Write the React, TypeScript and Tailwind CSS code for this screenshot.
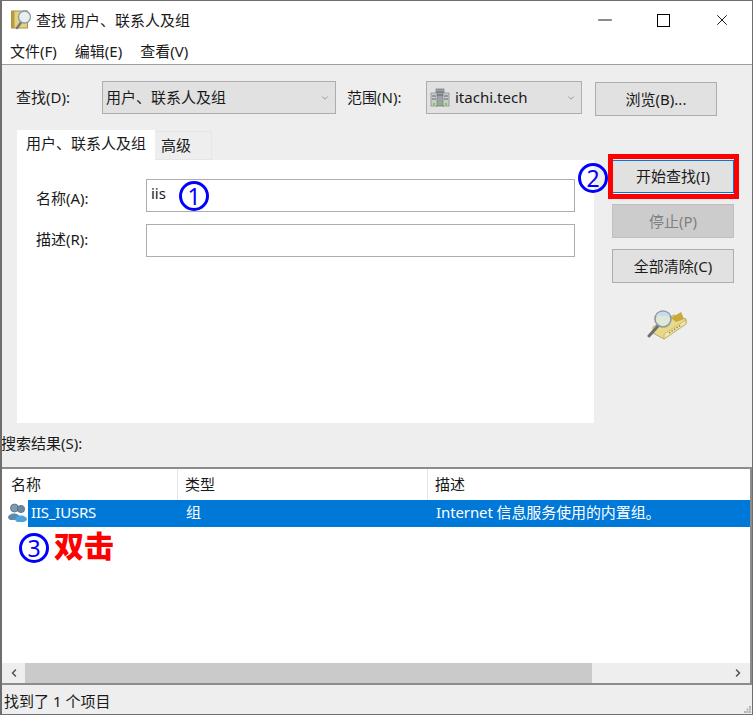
import { ChevronDown, ChevronLeft, ChevronRight, Minus, X } from "lucide-react";

const font = "font-['Noto_Sans','Noto_Sans_CJK_SC',sans-serif]";

function SearchBookIcon({ className }: { className?: string }) {
  return (
    <svg viewBox="0 0 40 30" className={className}>
      <path d="M6 17 L27 5 L39 9 L39 14 L17 29 L6 23 Z" fill="#e8d98a" stroke="#b09a4a" strokeWidth="0.8" />
      <path d="M24 8 L34 2 L37 9 L29 12 Z" fill="#c9a83c" />
      <path d="M17 29 L39 14 L39 10 L17 24 Z" fill="#f2e6a6" stroke="#b5a355" strokeWidth="0.6" />
      <path d="M22 23 L34 15" stroke="#8f8350" strokeWidth="1.4" strokeDasharray="1.5 1.5" />
      <path d="M11 16 L2 26" stroke="#6e6e6e" strokeWidth="3" strokeLinecap="round" />
      <circle cx="16" cy="9" r="8" fill="#dfe7d8" stroke="#8b98a4" strokeWidth="1.6" />
      <path d="M9 6 A8 8 0 0 1 23 6 Z" fill="#c4dcee" />
    </svg>
  );
}

function TitleIcon() {
  return (
    <svg viewBox="0 0 20 20" className="w-5 h-5 shrink-0">
      <rect x="0.5" y="1" width="16" height="17" fill="#e3d27f" stroke="#a8924a" strokeWidth="1" />
      <rect x="0.5" y="1" width="3" height="17" fill="#b59b45" />
      <path d="M11 11 L6 18" stroke="#77777a" strokeWidth="2.4" strokeLinecap="round" />
      <circle cx="13.5" cy="7" r="6" fill="#e9eef0" stroke="#8a9aa6" strokeWidth="1.3" />
    </svg>
  );
}

function ServerIcon() {
  return (
    <svg viewBox="0 0 20 20" className="w-5 h-5 shrink-0">
      <rect x="6" y="1" width="8" height="17" fill="#9aa3a5" stroke="#6f787a" strokeWidth="0.7" />
      <rect x="1" y="5" width="6" height="13" fill="#c9cdcb" stroke="#7c8486" strokeWidth="0.7" />
      <rect x="13" y="5" width="6" height="13" fill="#c9cdcb" stroke="#7c8486" strokeWidth="0.7" />
      <path d="M2 8h4M2 11h4M14 8h4M14 11h4M7 4h6M7 7h6" stroke="#5d6668" strokeWidth="1" />
      <rect x="3" y="15" width="2" height="2" fill="#6fd02f" />
      <rect x="9" y="15" width="2" height="2" fill="#6fd02f" />
      <rect x="15" y="15" width="2" height="2" fill="#6fd02f" />
    </svg>
  );
}

function GroupIcon() {
  return (
    <svg viewBox="0 0 20 20" className="w-5 h-5 shrink-0 self-start mt-[3px]">
      <circle cx="6.5" cy="5" r="4" fill="#7d9bb2" stroke="#4f6a80" strokeWidth="0.8" />
      <path d="M0 15 C0 9 12 9 12 15 L10 17 L2 17 Z" fill="#5d8aa8" />
      <circle cx="13" cy="6" r="3.6" fill="#6d8aa0" stroke="#4f6a80" strokeWidth="0.8" />
      <path d="M7 17 C7 11 19 11 19 17 L16 19 L9 19 Z" fill="#4fa3dd" />
    </svg>
  );
}

function Combo({ width, children }: { width: string; children: React.ReactNode }) {
  return (
    <div className={`${width} h-[33px] flex items-center justify-between bg-[#e1e1e1] border border-[#adadad] pl-[3px] pr-[5px]`}>
      <div className="flex items-center gap-[4px] text-[15px] text-[#1a1a1a]">{children}</div>
      <ChevronDown className="w-[10px] h-[10px] text-[#8a8a8a]" strokeWidth={2} />
    </div>
  );
}

function Button({ label, disabled, primary }: { label: string; disabled?: boolean; primary?: boolean }) {
  return (
    <div
      className={`w-[122px] flex items-center justify-center text-[15px] border ${
        disabled
          ? "h-[34px] bg-[#cccccc] border-[#bfbfbf] text-[#808080]"
          : primary
            ? "h-[33px] bg-[#e1e1e1] border-[#0078d7] text-[#1a1a1a]"
            : "h-[34px] bg-[#e1e1e1] border-[#adadad] text-[#1a1a1a]"
      }`}
    >
      {label}
    </div>
  );
}

function Circled({ n, className }: { n: string; className: string }) {
  return (
    <div className={`absolute w-[30px] h-[30px] rounded-full border-[3px] border-[#0000ff] flex items-center justify-center text-[#0000ff] text-[23px] leading-none ${className}`}>
      {n}
    </div>
  );
}

export default function App() {
  return (
    <div className={`${font} relative w-[753px] h-[715px] flex flex-col bg-[#eeeeee] border-l-2 border-r border-t border-b border-[#6e6e6e] text-[15px] text-[#1a1a1a] overflow-hidden`}>
      {/* title bar */}
      <div className="h-[38px] bg-white flex items-center pl-[9px]">
        <TitleIcon />
        <span className="ml-[5px]">查找 用户、联系人及组</span>
        <div className="ml-auto flex items-center">
          <Minus className="w-[22px] h-[22px] mr-[41px] text-black" strokeWidth={1} />
          <div className="w-[13px] h-[13px] border border-black mr-[43px]" />
          <X className="w-[18px] h-[18px] mr-[21px] text-black" strokeWidth={1.2} />
        </div>
      </div>

      {/* menu */}
      <div className="h-[25px] bg-white flex items-center gap-[18px] pl-[8px] pb-px">
        <span>文件(F)</span>
        <span>编辑(E)</span>
        <span>查看(V)</span>
      </div>
      <div className="h-px bg-[#a0a0a0]" />

      {/* search row */}
      <div className="flex items-center pl-[14px] mt-[16px] h-[33px]">
        <span className="w-[86px]">查找(D):</span>
        <Combo width="w-[234px]">用户、联系人及组</Combo>
        <span className="ml-[11px] w-[79px]">范围(N):</span>
        <Combo width="w-[156px]">
          <ServerIcon />
          <span className="ml-px">itachi.tech</span>
        </Combo>
        <div className="ml-[13px] w-[122px] h-[34px] self-start mt-px flex items-center justify-center bg-[#e1e1e1] border border-[#adadad]">浏览(B)...</div>
      </div>

      {/* tabs and right buttons */}
      <div className="flex pl-[15px] pt-[16px]">
        <div className="w-[577px] flex flex-col">
          <div className="flex items-end h-[30px]">
            <div className="w-[138px] h-[30px] bg-white flex items-start justify-center pt-[2px]">用户、联系人及组</div>
            <div className="w-[57px] h-[29px] bg-[#eeeeee] border border-[#e6e6e6] border-l-0 flex items-center pl-[6px]">高级</div>
          </div>
          <div className="h-[263px] bg-white pt-[19px] pl-[19px] flex flex-col gap-[12px]">
            <div className="flex items-center">
              <span className="w-[110px] pt-[6px]">名称(A):</span>
              <div className="w-[429px] h-[33px] border border-[#adadad] pl-[4px] leading-[26px]">iis</div>
            </div>
            <div className="flex items-center">
              <span className="w-[110px] pb-[2px]">描述(R):</span>
              <div className="w-[429px] h-[33px] border border-[#adadad]" />
            </div>
          </div>
        </div>
        <div className="ml-[18px] pt-[30px] flex flex-col gap-[11px]">
          <Button label="开始查找(I)" primary />
          <Button label="停止(P)" disabled />
          <Button label="全部清除(C)" />
          <SearchBookIcon className="w-[40px] h-[30px] ml-[35px] mt-[16px]" />
        </div>
      </div>

      <div className="h-[44px] flex items-end pb-[14px] leading-[20px] -ml-px">搜索结果(S):</div>

      {/* results list */}
      <div className="flex-1 flex flex-col bg-white border-t-2 border-b-2 border-r-2 border-[#8c8c8c]">
        <div className="h-[31px] flex items-center">
          <span className="w-[176px] h-full flex items-center pl-[9px] border-r border-[#e5e5e5]">名称</span>
          <span className="w-[250px] h-full flex items-center pl-[7px] border-r border-[#e5e5e5]">类型</span>
          <span className="pl-[7px]">描述</span>
        </div>
        <div className="flex h-[27px] items-center pl-[6px]">
          <GroupIcon />
          <div className="flex-1 h-full flex items-center bg-[#0078d7] text-white pb-[2px]">
            <span className="w-[158px] pl-[3px] tracking-[-0.2px]">IIS_IUSRS</span>
            <span className="w-[250px]">组</span>
            <span className="tracking-[-0.1px]">Internet 信息服务使用的内置组。</span>
          </div>
        </div>
        <div className="flex-1" />
        {/* scrollbar */}
        <div className="h-[20px] flex items-center bg-[#eeeeee]">
          <div className="w-[23px] flex justify-center"><ChevronLeft className="w-[12px] h-[12px] text-[#505050]" strokeWidth={3} /></div>
          <div className="w-[567px] h-full bg-[#cacaca]" />
          <div className="flex-1 flex justify-end pr-[6px]"><ChevronRight className="w-[12px] h-[12px] text-[#505050]" strokeWidth={3} /></div>
        </div>
      </div>

      {/* status bar */}
      <div className="relative h-[29px] flex items-center pl-[2px] pt-[3px]">
        找到了 1 个项目
        <svg viewBox="0 0 7 7" className="absolute right-[1px] bottom-[1px] w-[7px] h-[7px]">
          <path d="M5 0h2v2H5zM2.5 2.5h2v2h-2zM5 2.5h2v2H5zM0 5h2v2H0zM2.5 5h2v2h-2zM5 5h2v2H5z" fill="#b5b5b5" />
        </svg>
      </div>

      {/* annotations */}
      <Circled n="1" className="left-[177px] top-[180px]" />
      <Circled n="2" className="left-[576px] top-[162px]" />
      <Circled n="3" className="left-[17px] top-[532px]" />
      <div className="absolute left-[606px] top-[153px] w-[131px] h-[45px] border-[5px] border-[#ff0000]" />
      <div className="absolute left-[52px] top-[527px] text-[30px] font-black leading-[36px] text-[#ff0000]">双击</div>
    </div>
  );
}
